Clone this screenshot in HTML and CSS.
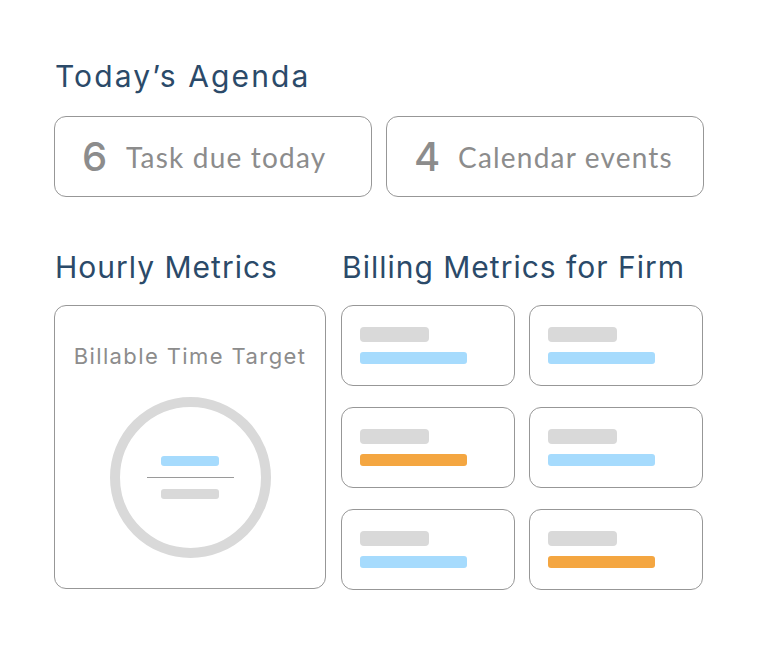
FILE: index.html
```html
<!DOCTYPE html>
<html>
<head>
<meta charset="utf-8">
<link rel="stylesheet" href="styles.css">
</head>
<body>
<div class="page">
  <section class="agenda">
    <h2 class="title">Today’s Agenda</h2>
    <div class="agenda-grid">
      <div class="card stat"><span class="num">6</span><span class="label">Task due today</span></div>
      <div class="card stat"><span class="num">4</span><span class="label">Calendar events</span></div>
    </div>
  </section>
  <section class="metrics">
    <div class="col-left">
      <h2 class="title">Hourly Metrics</h2>
      <div class="card target">
        <div class="target-title">Billable Time Target</div>
        <div class="ring">
          <div class="bar blue small"></div>
          <div class="divider"></div>
          <div class="bar gray small"></div>
        </div>
      </div>
    </div>
    <div class="col-right">
      <h2 class="title">Billing Metrics for Firm</h2>
      <div class="billing-grid">
        <div class="card mini"><div class="bar gray short"></div><div class="bar blue long"></div></div>
        <div class="card mini"><div class="bar gray short"></div><div class="bar blue long"></div></div>
        <div class="card mini"><div class="bar gray short"></div><div class="bar orange long"></div></div>
        <div class="card mini"><div class="bar gray short"></div><div class="bar blue long"></div></div>
        <div class="card mini"><div class="bar gray short"></div><div class="bar blue long"></div></div>
        <div class="card mini"><div class="bar gray short"></div><div class="bar orange long"></div></div>
      </div>
    </div>
  </section>
</div>
</body>
</html>
```
FILE: styles.css
```css
html, body {
  margin: 0;
  padding: 0;
  background: #ffffff;
}
.page {
  width: 650px;
  padding: 56px 0 0 54px;
  font-family: Inter, "DejaVu Sans", sans-serif;
}
.title {
  margin: 0;
  font-weight: 400;
  font-size: 30px;
  line-height: 40px;
  letter-spacing: 1px;
  color: #2b4a69;
}
.card {
  box-sizing: border-box;
  border: 1.5px solid #979797;
  border-radius: 12px;
  background: #fff;
}
.agenda .title {
  padding-left: 1px;
  letter-spacing: 2.1px;
}
.agenda-grid {
  display: grid;
  grid-template-columns: 318px 318px;
  gap: 14px;
  margin-top: 20px;
}
.stat {
  height: 81px;
  display: flex;
  align-items: center;
  padding-left: 27px;
  color: #8c8c8c;
  font-family: Lato, "Open Sans", sans-serif;
}
.num {
  font-family: Inter, "DejaVu Sans", sans-serif;
  font-size: 40px;
  font-weight: 500;
  width: 44px;
}
.label {
  font-size: 28px;
  letter-spacing: 1.2px;
}
.metrics {
  display: flex;
  gap: 15px;
  margin-top: 50px;
}
.col-left {
  width: 272px;
}
.col-left .title {
  padding-left: 1px;
}
.col-right {
  width: 362px;
}
.col-right .title {
  padding-left: 1px;
}
.target {
  margin-top: 18px;
  height: 284px;
  display: flex;
  flex-direction: column;
  align-items: center;
  padding-top: 36px;
}
.target-title {
  font-size: 22px;
  line-height: 28px;
  letter-spacing: 1.4px;
  color: #8c8c8c;
}
.ring {
  box-sizing: border-box;
  margin-top: 27px;
  width: 161px;
  height: 161px;
  border: 10px solid #d9d9d9;
  border-radius: 50%;
  display: flex;
  flex-direction: column;
  align-items: center;
  justify-content: center;
}
.divider {
  width: 87px;
  height: 1px;
  background: #9a9a9a;
  margin: 11px 0;
}
.bar {
  border-radius: 4px;
}
.bar.small {
  width: 58px;
  height: 10px;
  border-radius: 3px;
}
.bar.gray { background: #d9d9d9; }
.bar.blue { background: #a6dbfd; }
.bar.orange { background: #f4a641; }
.billing-grid {
  margin-top: 18px;
  display: grid;
  grid-template-columns: 174px 174px;
  column-gap: 14px;
  row-gap: 21px;
}
.mini {
  height: 81px;
  padding: 21px 0 0 18px;
}
.bar.short {
  width: 69px;
  height: 15px;
}
.bar.long {
  width: 107px;
  height: 12px;
  margin-top: 10px;
  border-radius: 3px;
}
```
